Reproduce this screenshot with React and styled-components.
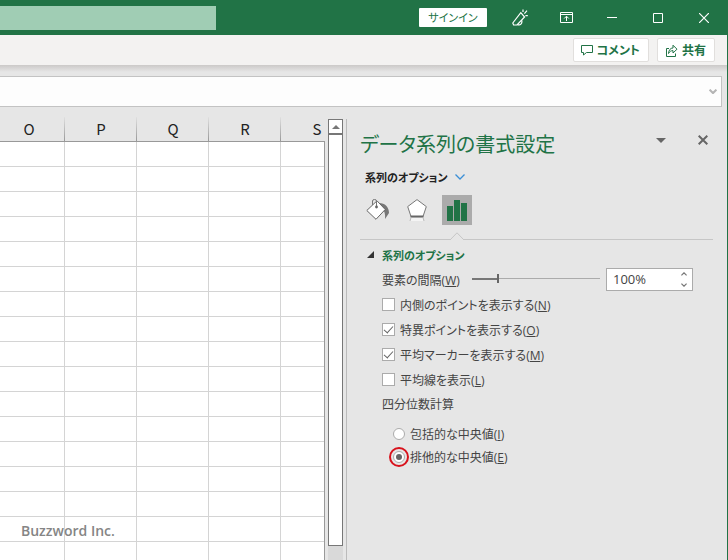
import React, { useState } from 'react'
import styled, { createGlobalStyle } from 'styled-components'

const green = "#217346"

const GlobalStyle = createGlobalStyle`
* { box-sizing: border-box; }
body {
  margin: 0;
  background: #e6e6e6;
  color: #444;
  font-family: "Open Sans", "Noto Sans CJK JP", sans-serif;
  font-size: 12px;
  font-feature-settings: "palt";
}
button, input {
  font: inherit;
  font-feature-settings: inherit;
  color: inherit;
  margin: 0;
  padding: 0;
  border: none;
  background: none;
}
svg { display: block; }
`

const Window = styled.div`
height: 100vh;
display: flex;
flex-direction: column;
overflow: hidden;
border-right: 1px solid ${green};
`
const TitleBar = styled.header`
height: 35px;
flex: none;
display: flex;
align-items: center;
background: ${green};
`
const Search = styled.input`
width: 216px;
height: 24px;
margin-right: auto;
background: #a0cdb4;
`
const SignIn = styled.button`
width: 68px;
height: 19px;
margin-right: 10px;
border-radius: 1px;
background: #fff;
color: ${green};
font-size: 11px;
line-height: 18px;
`
const WindowButton = styled.button`
width: 46px;
height: 34px;
display: flex;
align-items: center;
justify-content: center;
color: #fff;
`
const Ribbon = styled.div`
height: 30px;
flex: none;
display: flex;
justify-content: flex-end;
align-items: center;
gap: 8px;
padding-right: 12px;
background: #f3f2f1;
`
const RibbonButton = styled.button`
height: 24px;
display: flex;
align-items: center;
gap: 4px;
padding: 0 8px 0 7px;
border: 1px solid #e1dfdd;
border-radius: 2px;
background: #fff;
color: ${green};
font-size: 12px;
font-weight: 700;
`
const RibbonShadow = styled.div`
height: 11px;
flex: none;
background: linear-gradient(#cbc9c8, #e6e6e6 7px);
`
const FormulaBar = styled.div`
height: 31px;
flex: none;
display: flex;
margin-right: 5px;
border: 1px solid #c3c3c3;
border-left: none;
background: #fdfdfd;
`
const FormulaInput = styled.input`
flex: 1;
min-width: 0;
padding: 0 8px;
`
const ExpandButton = styled.button`
width: 16px;
display: flex;
align-items: center;
justify-content: center;
color: #b4b4b4;
`
const Body = styled.div`
flex: 1;
min-height: 0;
display: flex;
`
const Sheet = styled.div`
flex: 1;
min-width: 0;
overflow: hidden;
position: relative;
padding-top: 10px;
`
const Table = styled.table`
table-layout: fixed;
width: 360px;
margin-left: -7px;
border-collapse: separate;
border-spacing: 0;
`
const HeadCell = styled.th`
height: 25px;
padding: 0;
border-bottom: 1px solid #999;
background: linear-gradient(#e0e0e0, #999) right / 1px 100% no-repeat;
color: #222;
font-family: "Noto Sans CJK JP", sans-serif;
font-size: 15px;
font-weight: 400;
line-height: 22px;
`
const Cell = styled.td`
height: 25px;
padding: 0;
border-right: 1px solid #d4d4d4;
border-bottom: 1px solid #d4d4d4;
background: #fff;
`
const SheetEdge = styled.div`
width: 1px;
flex: none;
margin-top: 34px;
background: #999;
`
const Watermark = styled.span`
position: absolute;
left: 21px;
bottom: 19px;
color: #858585;
font-size: 14px;
font-weight: 600;
line-height: 20px;
`
const ScrollBar = styled.div`
width: 15px;
flex: none;
display: flex;
flex-direction: column;
margin: 12px 3px 0;
background: #d9d9d9;
`
const ScrollUp = styled.button`
height: 15px;
flex: none;
display: flex;
align-items: center;
justify-content: center;
border: 1px solid #777;
background: #fff;
`
const ScrollThumb = styled.div`
flex: 1;
margin-bottom: 14px;
border: 1px solid #777;
background: #fff;
`
const Pane = styled.aside`
width: 381px;
flex: none;
margin-top: 12px;
padding: 10px 14px 0 13px;
border-left: 1px solid #bbb;
`
const PaneHead = styled.div`
display: flex;
align-items: flex-start;
gap: 28px;
padding-right: 3px;
`
const PaneTitle = styled.h1`
flex: 1;
margin: 0;
color: ${green};
font-size: 20px;
font-weight: 400;
line-height: 32px;
`
const PaneButton = styled.button`
width: 14px;
height: 22px;
display: flex;
align-items: center;
justify-content: center;
color: #666;
`
const OptionsMenu = styled.button`
height: 24px;
display: flex;
align-items: center;
gap: 7px;
margin: 4px 0 6px 5px;
color: #222;
font-size: 11px;
font-weight: 700;
`
const Tabs = styled.div`
display: flex;
gap: 10px;
padding: 0 2px 14px;
border-bottom: 1px solid #c6c6c6;
`
const Tab = styled.button`
position: relative;
width: 30px;
height: 30px;
display: flex;
align-items: center;
justify-content: center;
background: ${props => props.$active ? "#ababab" : "none"};
`
const Notch = styled.svg`
position: absolute;
left: 8px;
top: 37px;
`
const Section = styled.section`
padding: 2px 0 0 22px;
`
const SectionTitle = styled.h2`
margin: 0 0 0 -15px;
font-size: 11px;
`
const SectionToggle = styled.button`
height: 25px;
display: flex;
align-items: center;
gap: 8px;
color: ${green};
font-weight: 700;
`
const Row = styled.div`
height: 25px;
display: flex;
align-items: center;
`
const CheckLabel = styled.label`
height: 25px;
display: flex;
align-items: center;
gap: 5px;
`
const RadioGroup = styled.fieldset`
margin: 0;
padding: 0;
border: none;
`
const Legend = styled.legend`
padding: 0;
margin-bottom: 5px;
line-height: 25px;
`
const RadioLabel = styled.label`
height: 23px;
display: flex;
align-items: center;
gap: 5px;
margin-left: 11px;
`
const CheckBox = styled.input`
appearance: none;
width: 13px;
height: 13px;
display: grid;
place-items: center;
border: 1px solid #ababab;
background: #fff;
&:checked::before {
  content: "";
  width: 4px;
  height: 8px;
  margin-bottom: 2px;
  border: solid #666;
  border-width: 0 1px 1px 0;
  transform: rotate(42deg);
}
`
const Radio = styled.input`
appearance: none;
width: 12px;
height: 12px;
display: grid;
place-items: center;
border: 1px solid #ababab;
border-radius: 50%;
background: #fff;
outline: ${props => props.checked ? "2px solid #d8121c" : "none"};
outline-offset: 2px;
&:checked::before {
  content: "";
  width: 6px;
  height: 6px;
  border-radius: 50%;
  background: #666;
}
`
const GapSlider = styled.input`
appearance: none;
flex: 1;
min-width: 0;
height: 11px;
margin: 0 6px 2px 12px;
background:
  linear-gradient(#777, #777) left center / ${props => props.value / 5}% 2px no-repeat,
  linear-gradient(#ababab, #ababab) center / 100% 1px no-repeat;
&::-webkit-slider-thumb {
  appearance: none;
  width: 2px;
  height: 9px;
  background: #666;
}
`
const SpinBox = styled.div`
width: 87px;
height: 23px;
display: flex;
margin-right: 20px;
border: 1px solid #ababab;
background: #fff;
`
const SpinInput = styled.input`
flex: 1;
min-width: 0;
padding: 0 0 2px 6px;
font-size: 13px;
`
const SpinButtons = styled.div`
width: 16px;
display: flex;
flex-direction: column;
`
const SpinButton = styled.button`
flex: 1;
display: flex;
align-items: center;
justify-content: center;
color: #777;
`

const PenIcon = () => (
  <svg width="16" height="17" viewBox="0 0 16 17" fill="none" stroke="currentColor" strokeWidth="1.2">
    <path d="M8.8 3.6 12.6 8 5 15.8 1.6 16 .8 14Z" />
    <path d="M5.4 15.4C8 17 10.8 14.4 9.6 11.2" />
    <path d="M11 3V.6M12.4 4.6 15 1.6M13.4 6.6H15.8" />
  </svg>
)
const DisplayIcon = () => (
  <svg width="13" height="11" viewBox="0 0 13 11" fill="none" stroke="currentColor">
    <path d="M.5.5H12.5V10.5H.5ZM.5 2.5H12.5M6.5 9V4.5M4.2 6.5 6.5 4.2 8.8 6.5" />
  </svg>
)
const CommentIcon = () => (
  <svg width="12" height="12" viewBox="0 0 12 12" fill="none" stroke="currentColor">
    <path d="M.5 1.5H11.5V8.5H5.5L2.5 11V8.5H.5Z" />
  </svg>
)
const ShareIcon = () => (
  <svg width="13" height="13" viewBox="0 0 13 13" fill="none" stroke="currentColor">
    <path d="M4 4.5H1.5V12.5H10.5V9.5" />
    <path d="M3.5 9.5C3.8 6 5.4 4 8 4V1.2L12 5.2 8 9V6.6C6 6.6 4.6 7.6 3.5 9.5Z" />
  </svg>
)
const Chevron = ({ width = 10, up, stroke = 1.3 }) => (
  <svg width={width} height={width / 2 + 1} viewBox="0 0 10 6" fill="none" stroke="currentColor" strokeWidth={stroke}>
    <path d={up ? "M.7 5.3 5 1 9.3 5.3" : "M.7.7 5 5 9.3.7"} />
  </svg>
)
const FillIcon = () => (
  <svg width="24" height="24" viewBox="0 0 24 24">
    <path d="M14 5C20 5 24 9 24 15L20 21C20.5 16 19.5 13 17 10Z" fill="#777" />
    <path d="M12 2.8 20.2 11.5 11 21.3 1.8 12.5Z" fill="#fff" stroke="#666" />
    <path d="M7.5 7V3Q7.5 1.5 9.5 1.5T11.5 3V9" fill="none" stroke="#777" />
    <circle cx="11.5" cy="9" r="1.4" fill="#666" />
  </svg>
)
const EffectsIcon = () => (
  <svg width="22" height="24" viewBox="0 0 22 24">
    <path d="M11 1.6 20.3 8.6 17 18.5H5L1.7 8.6Z" fill="#fff" stroke="#777" />
    <path d="M4.5 18.5H17.5" stroke="#666" strokeWidth="2" />
    <path d="M5 20H17L18 23H4Z" fill="#f4f4f4" />
    <path d="M5 19.5 4 23M17 19.5 18 23" stroke="#bbb" />
  </svg>
)
const ChartIcon = () => (
  <svg width="20" height="21" viewBox="0 0 20 21" fill={green}>
    <path d="M0 6H6V21H0ZM7 0H13V21H7ZM14 3H20V21H14Z" />
  </svg>
)

const columns = ["O", "P", "Q", "R", "S"]
const rows = Array.from({ length: 17 }, (_, i) => i)

const checkItems = [
  { id: "inner", text: "内側のポイントを表示する", accel: "N", on: false },
  { id: "outlier", text: "特異ポイントを表示する", accel: "O", on: true },
  { id: "mean", text: "平均マーカーを表示する", accel: "M", on: true },
  { id: "line", text: "平均線を表示", accel: "L", on: false },
]
const quartileItems = [
  { id: "inclusive", text: "包括的な中央値", accel: "I" },
  { id: "exclusive", text: "排他的な中央値", accel: "E" },
]

const Accel = ({ text, accel }) => <span>{text}(<u>{accel}</u>)</span>

const FormatPane = () => {
  const [tab, setTab] = useState(2)
  const [open, setOpen] = useState(true)
  const [gap, setGap] = useState(100)
  const [checks, setChecks] = useState(checkItems.filter(c => c.on).map(c => c.id))
  const [quartile, setQuartile] = useState("exclusive")

  const handleCheck = (id) => {
    setChecks(checks.includes(id) ? checks.filter(c => c !== id) : [...checks, id])
  }
  const handleGap = (value) => {
    setGap(Math.max(0, Math.min(500, parseInt(value) || 0)))
  }

  return (
    <Pane>
      <PaneHead>
        <PaneTitle>データ系列の書式設定</PaneTitle>
        <PaneButton aria-label="作業ウィンドウのオプション">
          <svg width="10" height="5" fill="currentColor"><path d="M0 0H10L5 5Z" /></svg>
        </PaneButton>
        <PaneButton aria-label="閉じる">
          <svg width="10" height="10" stroke="currentColor" strokeWidth="2"><path d="M.7.7 9.3 9.3M9.3.7.7 9.3" /></svg>
        </PaneButton>
      </PaneHead>
      <OptionsMenu>
        系列のオプション
        <svg width="10" height="6" fill="none" stroke="#3b8fd6" strokeWidth="1.3"><path d="M.5.5 5 5 9.5.5" /></svg>
      </OptionsMenu>
      <Tabs>
        {[FillIcon, EffectsIcon, ChartIcon].map((Icon, i) =>
          <Tab key={i} $active={tab === i} aria-label={["塗りつぶしと線", "効果", "系列のオプション"][i]} onClick={() => setTab(i)}>
            <Icon />
            {tab === i &&
              <Notch width="14" height="8" fill="#e6e6e6" stroke="#c6c6c6"><path d="M0 8 7 .8 14 8" /></Notch>}
          </Tab>
        )}
      </Tabs>
      <Section>
        <SectionTitle>
          <SectionToggle aria-expanded={open} onClick={() => setOpen(!open)}>
            <svg width="7" height="7" fill="#333"><path d="M7 0V7H0Z" /></svg>
            系列のオプション
          </SectionToggle>
        </SectionTitle>
        {open && <>
          <Row>
            <label htmlFor="gap"><Accel text="要素の間隔" accel="W" /></label>
            <GapSlider id="gap" type="range" min="0" max="500" value={gap} onChange={e => handleGap(e.target.value)} />
            <SpinBox>
              <SpinInput aria-label="要素の間隔" value={gap + "%"} onChange={e => handleGap(e.target.value)} />
              <SpinButtons>
                <SpinButton aria-label="増やす" onClick={() => handleGap(gap + 1)}><Chevron width={6} up stroke={2} /></SpinButton>
                <SpinButton aria-label="減らす" onClick={() => handleGap(gap - 1)}><Chevron width={6} stroke={2} /></SpinButton>
              </SpinButtons>
            </SpinBox>
          </Row>
          {checkItems.map(item =>
            <CheckLabel key={item.id}>
              <CheckBox type="checkbox" checked={checks.includes(item.id)} onChange={() => handleCheck(item.id)} />
              <Accel text={item.text} accel={item.accel} />
            </CheckLabel>
          )}
          <RadioGroup>
            <Legend>四分位数計算</Legend>
            {quartileItems.map(item =>
              <RadioLabel key={item.id}>
                <Radio type="radio" name="quartile" checked={quartile === item.id} onChange={() => setQuartile(item.id)} />
                <Accel text={item.text} accel={item.accel} />
              </RadioLabel>
            )}
          </RadioGroup>
        </>}
      </Section>
    </Pane>
  )
}

const App = () => {
  return (
    <Window>
      <GlobalStyle />
      <TitleBar>
        <Search aria-label="検索" />
        <SignIn>サインイン</SignIn>
        <WindowButton aria-label="ペン"><PenIcon /></WindowButton>
        <WindowButton aria-label="リボンの表示オプション"><DisplayIcon /></WindowButton>
        <WindowButton aria-label="最小化">
          <svg width="10" height="10" stroke="currentColor"><path d="M0 4.5H10" /></svg>
        </WindowButton>
        <WindowButton aria-label="最大化">
          <svg width="10" height="10" fill="none" stroke="currentColor"><path d="M.5.5H9.5V9.5H.5Z" /></svg>
        </WindowButton>
        <WindowButton aria-label="閉じる">
          <svg width="10" height="10" stroke="currentColor" strokeWidth="1.2"><path d="M0 0 10 10M10 0 0 10" /></svg>
        </WindowButton>
      </TitleBar>
      <Ribbon>
        <RibbonButton><CommentIcon />コメント</RibbonButton>
        <RibbonButton><ShareIcon />共有</RibbonButton>
      </Ribbon>
      <RibbonShadow />
      <FormulaBar>
        <FormulaInput aria-label="数式バー" />
        <ExpandButton aria-label="数式バーの展開"><Chevron width={8} stroke={2.6} /></ExpandButton>
      </FormulaBar>
      <Body>
        <Sheet>
          <Table>
            <thead>
              <tr>{columns.map(c => <HeadCell key={c} scope="col">{c}</HeadCell>)}</tr>
            </thead>
            <tbody>
              {rows.map(r => <tr key={r}>{columns.map(c => <Cell key={c} />)}</tr>)}
            </tbody>
          </Table>
          <Watermark>Buzzword Inc.</Watermark>
        </Sheet>
        <SheetEdge />
        <ScrollBar>
          <ScrollUp aria-label="上へスクロール">
            <svg width="8" height="4" fill="#777"><path d="M4 0 8 4H0Z" /></svg>
          </ScrollUp>
          <ScrollThumb />
        </ScrollBar>
        <FormatPane />
      </Body>
    </Window>
  )
}

export default App
